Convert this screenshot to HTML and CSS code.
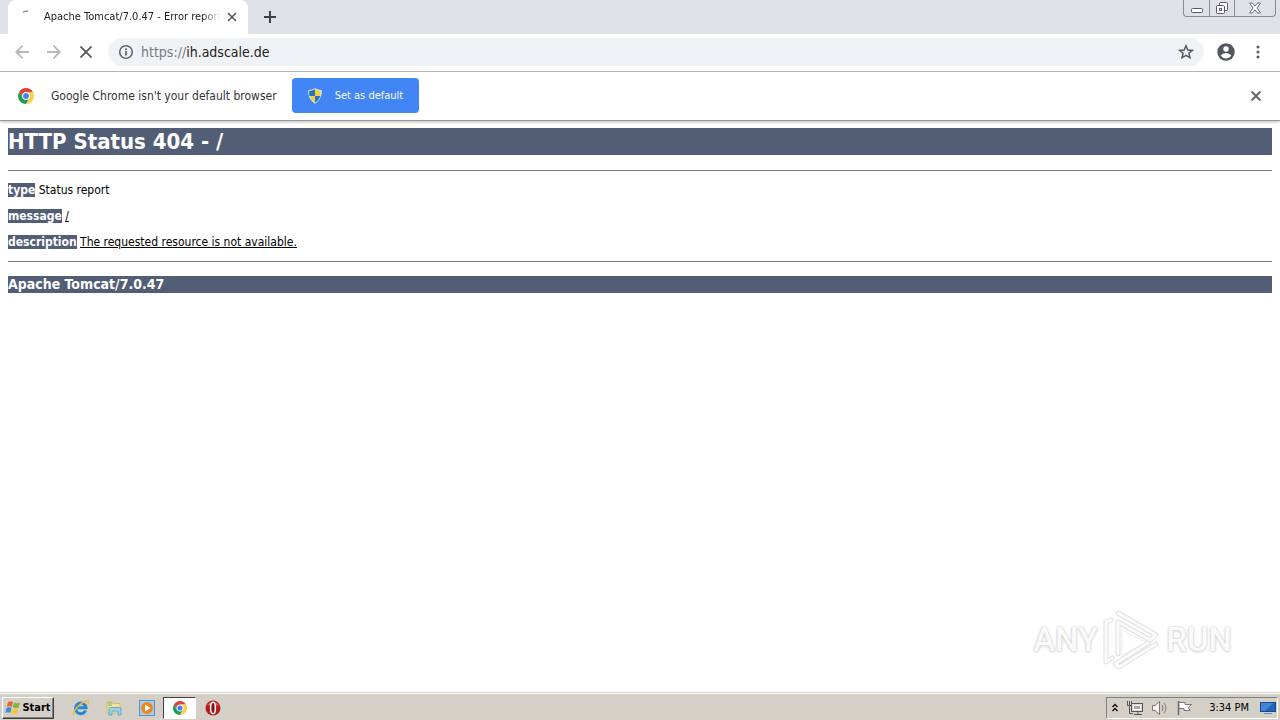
FILE: index.html
```html
<!DOCTYPE html>
<html lang="en">
<head>
<meta charset="utf-8">
<title>Apache Tomcat/7.0.47 - Error report</title>
<link rel="stylesheet" href="styles.css">
</head>
<body>
<svg class="defs" width="0" height="0" aria-hidden="true">
  <symbol id="chrome" viewBox="0 0 16 16">
    <circle cx="8" cy="8" r="8" fill="#fff"/>
    <path d="M1.1 4A8 8 0 0 1 14.9 4L8 4A4 4 0 0 0 4.5 10Z" fill="#dc4437"/>
    <path d="M1.1 4A8 8 0 0 0 8 16L11.5 10A4 4 0 0 1 4.5 10Z" fill="#1b9d58"/>
    <path d="M14.9 4A8 8 0 0 1 8 16L11.5 10A4 4 0 0 0 8 4Z" fill="#fdce46"/>
    <circle cx="8" cy="8" r="3.7" fill="#fff"/>
    <circle cx="8" cy="8" r="2.9" fill="#4284f3"/>
  </symbol>
</svg>

<header class="tabstrip">
  <div class="tab">
    <svg class="spinner" width="16" height="16" viewBox="0 0 16 16"><path d="M4 3.500Q6 1.500 9 2" fill="none" stroke="#8b8f94" stroke-width="1.500"/></svg>
    <span class="tab-title">Apache Tomcat/7.0.47 - Error report</span>
    <button class="icon-btn" aria-label="Close tab"><svg width="10" height="10" viewBox="0 0 10 10"><path d="M1 1L9 9M9 1L1 9" stroke="#55595e" stroke-width="1.600"/></svg></button>
  </div>
  <button class="icon-btn new-tab" aria-label="New tab"><svg width="12" height="12" viewBox="0 0 12 12"><path d="M6 0V12M0 6H12" stroke="#3c4043" stroke-width="2"/></svg></button>
  <div class="window-controls">
    <button aria-label="Minimize"><svg width="12" height="12" viewBox="0 0 12 12"><rect x=".5" y="6.500" width="11" height="4" rx="1" fill="#fff" stroke="#565b66"/></svg></button>
    <button aria-label="Restore"><svg width="14" height="14" viewBox="0 0 14 14"><rect x="4.500" y="1.500" width="8" height="8" rx="1" fill="#fff" stroke="#565b66"/><rect x="1.500" y="4.500" width="8" height="8" rx="1" fill="#fff" stroke="#565b66"/><rect x="4.500" y="7.500" width="2" height="2" fill="#fff" stroke="#565b66"/></svg></button>
    <button class="wide" aria-label="Close"><svg width="12" height="12" viewBox="0 0 12 12"><path d="M.5 1H3.500L6 4L8.500 1H11.500L8 6L11.500 11H8.500L6 8L3.500 11H.5L4 6Z" fill="#fff" stroke="#6b707a"/></svg></button>
  </div>
</header>

<nav class="toolbar">
  <button class="icon-btn nav" aria-label="Back"><svg width="14" height="14" viewBox="0 0 14 14"><path d="M14 7H1M7.500 .7L1.200 7L7.500 13.300" fill="none" stroke="#b7b9bc" stroke-width="1.800"/></svg></button>
  <button class="icon-btn nav" aria-label="Forward"><svg width="14" height="14" viewBox="0 0 14 14"><path d="M0 7H13M6.500 .7L12.800 7L6.500 13.300" fill="none" stroke="#b7b9bc" stroke-width="1.800"/></svg></button>
  <button class="icon-btn nav" aria-label="Stop"><svg width="12" height="12" viewBox="0 0 12 12"><path d="M.5 .5L11.500 11.500M11.500 .5L.5 11.500" stroke="#55595e" stroke-width="1.800"/></svg></button>
  <div class="omnibox">
    <svg width="16" height="16" viewBox="0 0 16 16"><circle cx="8" cy="8" r="6.300" fill="none" stroke="#5f6368" stroke-width="1.500"/><path d="M8 7V11.500M8 4.300V6" stroke="#5f6368" stroke-width="1.600"/></svg>
    <a class="url" href="#"><span>https://</span>ih.adscale.de</a>
    <button class="icon-btn" aria-label="Bookmark"><svg width="16" height="16" viewBox="0 0 16 16"><path d="M8 1.800L9.800 6L14.300 6.400L10.900 9.300L12 13.800L8 11.400L4 13.800L5.100 9.300L1.700 6.400L6.200 6Z" fill="none" stroke="#55595e" stroke-width="1.500"/></svg></button>
  </div>
  <button class="icon-btn profile" aria-label="Profile"><svg width="18" height="18" viewBox="0 0 18 18"><circle cx="9" cy="9" r="8.700" fill="#54575d"/><circle cx="9" cy="6" r="2.700" fill="#fff"/><path d="M3.600 12.500Q5.500 10 9 10T14.400 12.500Q12.500 15.400 9 15.400T3.600 12.500Z" fill="#fff"/></svg></button>
  <button class="icon-btn menu" aria-label="Menu"><svg width="4" height="14" viewBox="0 0 4 14"><g fill="#55595e"><circle cx="2" cy="2" r="1.500"/><circle cx="2" cy="7" r="1.500"/><circle cx="2" cy="12" r="1.500"/></g></svg></button>
</nav>

<section class="infobar">
  <svg width="16" height="16"><use href="#chrome"/></svg>
  <span class="info-text">Google Chrome isn't your default browser</span>
  <button class="primary"><svg width="14" height="16" viewBox="0 0 14 16"><path d="M7 .7Q10 2.500 13.300 2.500Q13.600 11 7 15.300Q.4 11 .7 2.500Q4 2.500 7 .7Z" fill="#f4d03c" stroke="#e1eaf5"/><path d="M1.200 3Q4.500 3 7 1.300V8H1.500Q1 6 1.200 3ZM7 8H12.500Q11 12.500 7 14.700Z" fill="#2872c8"/></svg>Set as default</button>
  <button class="icon-btn dismiss" aria-label="Dismiss"><svg width="10" height="10" viewBox="0 0 10 10"><path d="M.5 .5L9.500 9.500M9.500 .5L.5 9.500" stroke="#666" stroke-width="2"/></svg></button>
</section>

<main class="page">
  <h1>HTTP Status 404 - /</h1>
  <hr>
  <p><b>type</b> Status report</p>
  <p><b>message</b> <u>/</u></p>
  <p><b>description</b> <u>The requested resource is not available.</u></p>
  <hr>
  <h3>Apache Tomcat/7.0.47</h3>
  <div class="watermark">
    <span>ANY</span>
    <svg width="60" height="64" viewBox="0 0 60 64"><g fill="none" stroke-linejoin="round" stroke-linecap="round"><path d="M16 5L54 27L48 32L16 14V46M9 12L4 14V54L10 50M54 36L17 59L13 56L46 35" stroke="#e0e0e0" stroke-width="5"/><path d="M16 5L54 27L48 32L16 14V46M9 12L4 14V54L10 50M54 36L17 59L13 56L46 35" stroke="#fbfbfb" stroke-width="3"/><path d="M20 47V22L43 34Z" stroke="#ededed" stroke-width="1"/></g></svg>
    <span>RUN</span>
  </div>
</main>

<footer class="taskbar">
  <button class="start"><svg width="16" height="16" viewBox="0 0 16 16"><path d="M3 2Q5.500 .5 8 2L6.800 7Q4.500 5.500 1.800 7Z" fill="#e96534"/><path d="M9 2.500Q12 4 15 2.500L13.700 7.500Q11 9 7.800 7.500Z" fill="#83b83d"/><path d="M1.500 8Q4 6.700 6.500 8L5.200 13Q3 11.500 .3 13Z" fill="#3d8fd1"/><path d="M7.500 8.700Q10.500 10 13.400 8.700L12 13.700Q9.500 15 6.200 13.700Z" fill="#f8c63d"/></svg>Start</button>
  <div class="launch">
    <button aria-label="Internet Explorer"><svg width="18" height="18" viewBox="0 0 18 18"><path d="M13.600 11.500A5.300 5.300 0 1 1 14 8.800H5" fill="none" stroke="#2a86d1" stroke-width="3"/><path d="M2 16Q-.5 14.500 5.500 8Q13 .5 16.300 2Q17.500 3 15.500 6" fill="none" stroke="#e4bd42" stroke-width="1.400"/></svg></button>
    <button aria-label="Explorer"><svg width="18" height="18" viewBox="0 0 18 18"><path d="M2 3H7L8 4.500H15V14H2Z" fill="#f5e29a" stroke="#d8bd62"/><path d="M4 3V7M6 3V7" stroke="#67b66d"/><path d="M4 10Q4 8.500 5.500 8.500H14.500Q16 8.500 16 10V16H13V12H7V16H4Z" fill="#9bd2ec" stroke="#5ca9cc"/></svg></button>
    <button aria-label="Media Player"><svg width="18" height="18" viewBox="0 0 18 18"><rect x="1.500" y="1.500" width="15" height="15" fill="#a9cff0" stroke="#5591c8"/><circle cx="9" cy="9" r="6" fill="#ee861f"/><path d="M7 5.500V12.500L12.500 9Z" fill="#fff"/></svg></button>
    <button class="active" aria-label="Chrome"><svg width="14" height="14"><use href="#chrome"/></svg></button>
    <button aria-label="Opera"><svg width="16" height="16" viewBox="0 0 16 16"><circle cx="8" cy="8" r="7.500" fill="#b51d1d"/><path d="M2 5Q8 -2 14 5Q8 7 2 5Z" fill="#d9605a"/><ellipse cx="8" cy="8" rx="2.400" ry="5.700" fill="#951212" stroke="#fff" stroke-width="1.500"/></svg></button>
  </div>
  <div class="tray">
    <svg width="8" height="10" viewBox="0 0 8 10"><path d="M1.500 4L4 1.500L6.500 4M1.500 8L4 5.500L6.500 8" fill="none" stroke="#111" stroke-width="1.400"/></svg>
    <svg width="18" height="16" viewBox="0 0 18 16"><rect x="5.500" y="3.500" width="11" height="8" fill="#ddd" stroke="#555"/><rect x="7.500" y="5.500" width="7" height="4" fill="#aaa" stroke="#fff"/><path d="M8 14.500H16M12 12V14M3.500 6V13.500H7" fill="none" stroke="#555"/><path d="M1.500 1V5.500H5.500V1M3.500 1V5" fill="none" stroke="#555"/></svg>
    <svg width="18" height="16" viewBox="0 0 18 16"><path d="M1.500 5.500H4L8.500 1.500V14.500L4 10.500H1.500Z" fill="#f3f3f3" stroke="#777"/><path d="M11 5Q13 8 11 11M13 3Q17 8 13 13" fill="none" stroke="#777"/></svg>
    <svg width="18" height="16" viewBox="0 0 18 16"><path d="M2.500 1V15" stroke="#666" stroke-width="1.500"/><path d="M3 2.500H9V4.500H15.500L12.500 7.500L14 10.500H8V8.500H3Z" fill="#fff" stroke="#777"/></svg>
    <time>3:34 PM</time>
    <svg width="16" height="14" viewBox="0 0 16 14"><rect x=".5" y="1.500" width="15" height="9" fill="#2466bb" stroke="#164a87"/><path d="M1 2H13L5 10H1Z" fill="#3f87d9"/><path d="M4 12.500H12" stroke="#5a8cc4"/></svg>
  </div>
</footer>
</body>
</html>
```
FILE: styles.css
```css
* { box-sizing: border-box; }
body {
  margin: 0;
  min-height: 100vh;
  display: flex;
  flex-direction: column;
  background: #fff;
  color: #000;
  font: 12px/14px "DejaVu Sans Condensed", "Noto Sans", sans-serif;
}
svg { display: block; flex: none; }
.defs { position: absolute; }
button { font: inherit; padding: 0; border: 0; background: none; display: flex; align-items: center; justify-content: center; flex: none; }

.tabstrip { display: flex; height: 34px; background: #dee1e8; padding-left: 8px; }
.tab { display: flex; align-items: center; width: 240px; padding: 0 11px; background: #fff; border-radius: 8px 8px 0 0; }
.spinner { margin-right: 9px; }
.tab-title {
  flex: 1;
  min-width: 0;
  margin-right: 7px;
  overflow: hidden;
  white-space: nowrap;
  font-size: 11px;
  color: #222;
  mask-image: linear-gradient(to right, #000 90%, transparent);
}
.new-tab { margin-left: 16px; }
.window-controls { display: flex; height: 17px; margin-left: auto; margin-right: 4px; border: 1px solid #858a96; border-top: 0; border-radius: 0 0 4px 4px; }
.window-controls button { width: 25px; }
.window-controls button + button { border-left: 1px solid #858a96; }
.window-controls .wide { width: 41px; }

.toolbar { display: flex; align-items: center; height: 38px; padding: 0 12px 2px 6px; border-bottom: 1px solid #b4b4b5; }
.nav { width: 32px; }
.omnibox { display: flex; flex: 1; align-items: center; height: 28px; margin-left: 6px; padding: 0 10px; border-radius: 14px; background: #f0f3f5; }
.url { flex: 1; margin-left: 7px; font-size: 14px; line-height: 20px; color: #222; text-decoration: none; }
.url span { color: #777b80; }
.profile { margin-left: 13px; }
.menu { width: 20px; margin-left: 13px; }

.infobar { display: flex; align-items: center; height: 49px; padding: 0 19px 1px 18px; border-bottom: 1px solid #999; box-shadow: 0 1px 3px #bbb; }
.info-text { margin-left: 17px; font-size: 12px; line-height: 16px; color: #333; }
.primary { gap: 13px; height: 35px; margin-left: 15px; padding: 0 16px; border-radius: 4px; background: #4285f4; color: #fff; font-size: 11px; }
.dismiss { margin-left: auto; }

.page { flex: 1; position: relative; padding: 7px 8px 0; }
h1, h3, b { background: #525d76; color: #fff; font-weight: bold; }
h1 { margin: 0 0 15px; font-size: 22px; line-height: 27px; }
h3 { margin: 14px 0 0; font-size: 14px; line-height: 17px; }
hr { height: 1px; margin: 0; border: 0; background: #808080; }
p { margin: 12px 0; line-height: 14px; }
.watermark {
  position: absolute;
  right: 48px;
  bottom: 20px;
  display: flex;
  align-items: center;
  gap: 4px;
  color: #fafafa;
  font: 500 33px/64px Roboto, "Open Sans", sans-serif;
  text-shadow: 0 0 2px #bbb, 0 1px 3px #ddd;
}

.taskbar { display: flex; align-items: center; height: 28px; padding: 2px 2px 0; background: #d4d0c8; border-top: 1px solid #d4d0c8; box-shadow: inset 0 1px #fff; }
.start { width: 52px; height: 22px; gap: 1px; background: #d4d0c8; border: 1px solid; border-color: #fff #404040 #404040 #fff; box-shadow: inset -1px -1px #808080; font-size: 11px; font-weight: bold; color: #000; }
.launch { display: flex; align-items: center; margin-left: 10px; }
.launch button { width: 33px; height: 22px; }
.launch .active { background: #fff; border: 1px solid; border-color: #404040 #fff #fff #404040; }
.tray { display: flex; align-items: center; height: 22px; margin-left: auto; padding: 0 1px 0 4px; gap: 7px; border: 1px solid; border-color: #808080 #fff #fff #808080; }
.tray time { margin: 0 4px 0 8px; font-size: 11px; }
```
